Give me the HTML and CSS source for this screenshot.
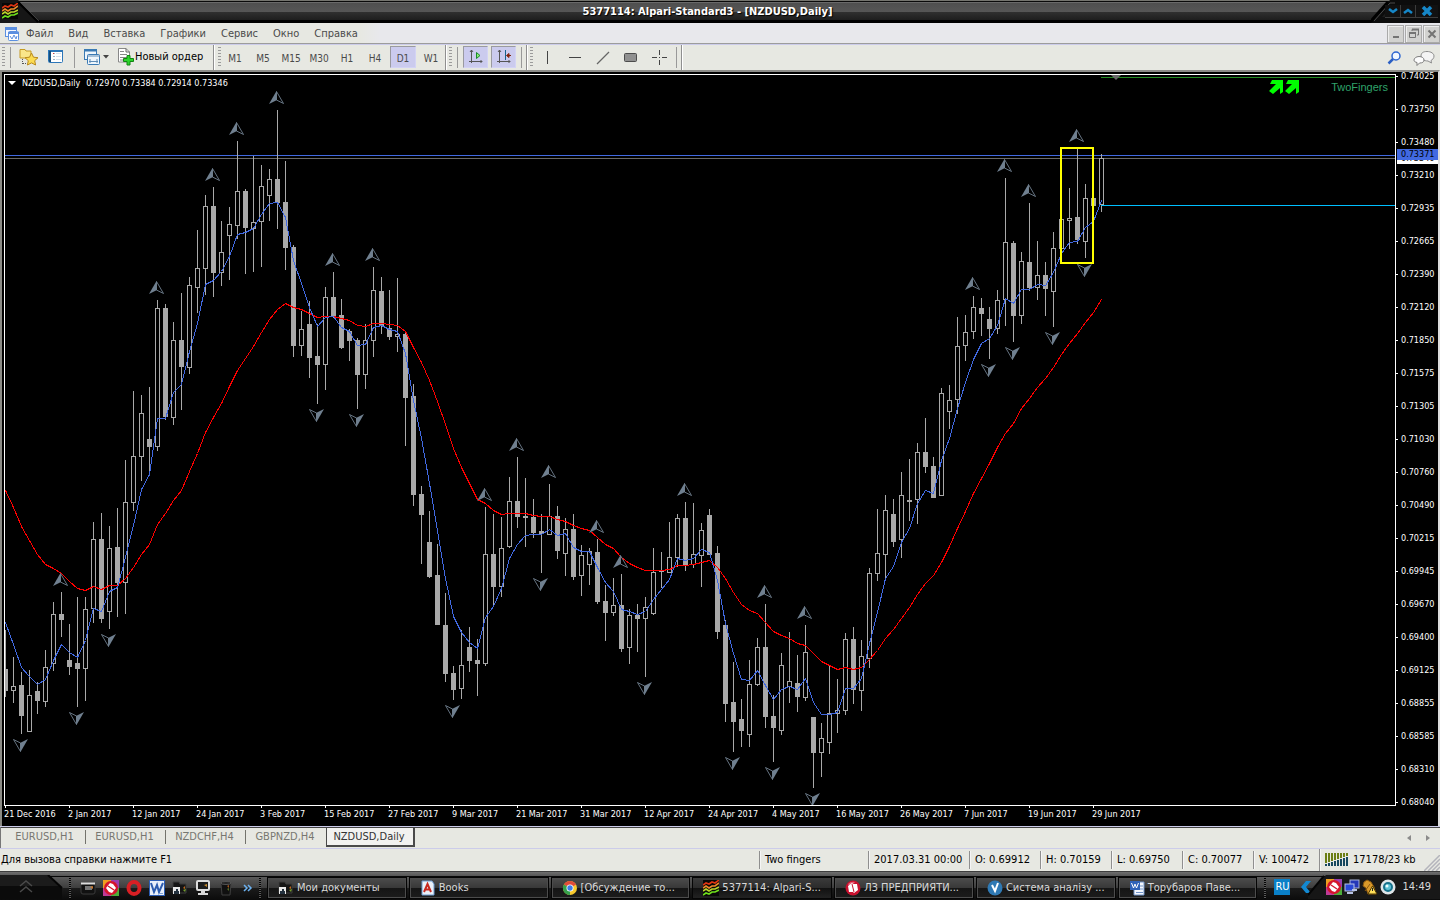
FILE: index.html
```html
<!DOCTYPE html>
<html lang="ru">
<head>
<meta charset="utf-8">
<title>5377114: Alpari-Standard3 - [NZDUSD,Daily]</title>
<link rel="stylesheet" href="styles.css">
</head>
<body>
<svg class="defs" aria-hidden="true">
  <defs>
    <symbol id="waves" viewBox="0 0 16 16">
      <rect width="16" height="16" fill="#080808"/>
      <g fill="none" stroke-width="1.600">
        <path d="M0 5 L3 3 L6 4 L9 2 L12 3 L16 0" stroke="#e03412"/>
        <path d="M0 8 L3 6 L6 8 L9 6 L12 6 L16 3" stroke="#ec8a2a"/>
        <path d="M0 11 L3 9 L6 11 L9 9 L12 9 L16 7" stroke="#b9d32b"/>
        <path d="M0 15 L3 13 L6 14 L9 12 L12 12 L16 10" stroke="#6fe01c"/>
      </g>
    </symbol>
    <symbol id="redball" viewBox="0 0 16 16">
      <circle cx="8" cy="8" r="7.500" fill="#c8102e"/>
      <path d="M3 4 Q6 1 10 2 L5 7Z" fill="#e9637a"/>
      <path d="M3 6 L7 3 L8 4 L12 4 L13 10 L9 13 L8 12 L4 12Z" fill="#fff"/>
      <path d="M7 4 L9 12" stroke="#c8102e" stroke-width="1"/>
    </symbol>
    <symbol id="rainbow" viewBox="0 0 16 16">
      <path d="M0 0H8V8H0Z" fill="#f0a020"/><path d="M8 0H16V8H8Z" fill="#9a3fb0"/>
      <path d="M0 8H8V16H0Z" fill="#c03a96"/><path d="M8 8H16V16H8Z" fill="#4cae3a"/>
      <circle cx="8" cy="8" r="7" fill="#d5142c"/>
      <path d="M3 8 L7 3 L10 4 L13 8 L9 13 L6 12Z" fill="#fff"/>
      <path d="M5 6 L11 10" stroke="#d5142c" stroke-width="1.300"/>
    </symbol>
    <symbol id="folder" viewBox="0 0 16 16">
      <path d="M1 2 H7 L8 4 H14 V13 H1Z" fill="#151515" stroke="#3c3c3c"/>
      <rect x="1" y="7" width="7" height="7" fill="#e8e8e8"/>
      <path d="M2 14 V11 H4 V9 H6 V11 H7 V14Z" fill="#23313e"/>
      <path d="M11 8 L13 6 V9Z" fill="#c26a1c"/><path d="M11 10 L14 9 L13 12Z" fill="#739d2c"/>
    </symbol>
    <symbol id="word" viewBox="0 0 16 16">
      <rect x=".5" y=".5" width="15" height="15" fill="#e8f0fb" stroke="#2c5db3"/>
      <path d="M2 3 L5 12 L8 5 L10 12 L14 3" fill="none" stroke="#2d5db0" stroke-width="2"/>
      <path d="M9 13.500H14" stroke="#7fa2d8"/>
    </symbol>
  </defs>
</svg>

<header class="titlebar">
  <svg class="title-left" viewBox="0 0 40 23" width="40" height="23" aria-hidden="true">
    <path d="M0 0H18L40 23H0Z" fill="#161616"/>
    <path d="M18 2L38 22" stroke="#000" stroke-width="2"/>
    <path d="M20 2L39 21" stroke="#555" stroke-width=".6"/>
    <use href="#waves" x="2" y="3" width="16" height="16"/>
  </svg>
  <h1 class="title">5377114: Alpari-Standard3 - [NZDUSD,Daily]</h1>
  <div class="window-controls">
    <svg class="window-edge" viewBox="0 0 24 23" width="24" height="23" aria-hidden="true">
      <path d="M0 23L19 0H24V23Z" fill="#0c0c0c"/><path d="M0 21L17 2" stroke="#000" stroke-width="3"/>
      <path d="M3 21L19 3H24" fill="none" stroke="#4a4a4a"/>
      <path d="M11 17L21 5H24V17Z" fill="#1c1c1c"/>
    </svg>
    <button class="window-button" aria-label="Свернуть"><svg viewBox="0 0 10 8" width="10" height="8"><path d="M1 2L5 5L9 2" fill="none" stroke="#1687c8" stroke-width="2.500"/></svg></button>
    <button class="window-button" aria-label="Развернуть"><svg viewBox="0 0 10 8" width="10" height="8"><path d="M1 6L5 3L9 6" fill="none" stroke="#1687c8" stroke-width="2.500"/></svg></button>
    <button class="window-button window-close" aria-label="Закрыть"><svg viewBox="0 0 12 10" width="12" height="10"><path d="M2 1L10 9M10 1L2 9" stroke="#1687c8" stroke-width="3.500"/></svg></button>
  </div>
</header>

<nav class="menubar">
  <svg class="menu-icon" viewBox="0 0 16 16" width="16" height="16" aria-hidden="true">
    <rect x="1.500" y="1.500" width="11" height="9" fill="#f4f8ff" stroke="#5b8fe0"/><path d="M1 3H13" stroke="#5b8fe0" stroke-width="2"/>
    <rect x="4.500" y="5.500" width="10" height="9" rx="1" fill="#fff" stroke="#5b8fe0"/><path d="M4 7H15" stroke="#5b8fe0" stroke-width="2"/>
    <path d="M6 10L8 13L10 9L12 13L13 10" fill="none" stroke="#5b8fe0"/>
  </svg>
  <button class="menu">Файл</button>
  <button class="menu">Вид</button>
  <button class="menu">Вставка</button>
  <button class="menu">Графики</button>
  <button class="menu">Сервис</button>
  <button class="menu">Окно</button>
  <button class="menu">Справка</button>
  <div class="mdi-controls">
    <button class="mdi" aria-label="Свернуть окно"><svg viewBox="0 0 12 12" width="12" height="12"><path d="M3 9H9" stroke="#747474" stroke-width="2"/></svg></button>
    <button class="mdi" aria-label="Восстановить окно"><svg viewBox="0 0 12 12" width="12" height="12"><path d="M4 3V1.500H10.500V7H9" fill="none" stroke="#747474"/><path d="M4 1.500H11" stroke="#747474" stroke-width="2"/><path d="M1.500 5V9.500H7.500V5" fill="none" stroke="#747474"/><path d="M1 5H8" stroke="#747474" stroke-width="2"/></svg></button>
    <button class="mdi" aria-label="Закрыть окно"><svg viewBox="0 0 12 12" width="12" height="12"><path d="M2.500 2.500L9.500 9.500M9.500 2.500L2.500 9.500" stroke="#747474" stroke-width="2"/></svg></button>
  </div>
</nav>

<div class="toolbar" role="toolbar" aria-label="Инструменты">
  <div class="tool-group tool-main">
    <span class="grip"></span><span class="line line-first"></span>
    <button class="tool tool-wide" aria-label="Новый график"><svg viewBox="0 0 20 18" width="20" height="18"><path d="M1 1.500H6L7 3H12V10H1Z" fill="#fae68a" stroke="#c59a24"/><path d="M3.500 11V16M4 15.500H8" stroke="#555" stroke-dasharray="1 1"/><path d="M12.500 5L14.500 9.200L19 9.700L15.700 12.700L16.600 17L12.500 14.900L8.400 17L9.300 12.700L6 9.700L10.500 9.200Z" fill="#fcdc52" stroke="#b8891c"/></svg></button>
    <button class="tool tool-wide tool-profiles" aria-label="Профили"><svg viewBox="0 0 18 16" width="18" height="16"><rect x="1.500" y="1.500" width="14" height="12" rx="1" fill="#fff" stroke="#2c76b8"/><path d="M1 2H16" stroke="#2c76b8" stroke-width="2"/><path d="M3 2V13" stroke="#16507f" stroke-width="2"/><path d="M6 4.500H8M6 7.500H8M6 10.500H8" stroke="#9fb5c8"/><path d="M6 4.500H7" stroke="#d33"/><path d="M9 4.500H14M9 7.500H14M9 10.500H14" stroke="#d4e0ec"/></svg></button>
    <span class="line"></span>
    <button class="tool tool-charts" aria-label="Расположение"><svg viewBox="0 0 26 18" width="26" height="18"><rect x="1.500" y="1.500" width="12" height="10" fill="#eef6fc" stroke="#3a7ab4"/><path d="M1 2.500H14" stroke="#3a7ab4" stroke-width="2"/><rect x="4.500" y="6.500" width="12" height="10" rx="1" fill="#eef6fc" stroke="#3a7ab4"/><path d="M4 8H17M6 13.500H15M7 11V15M14 11V15" stroke="#5e8cb5"/><path d="M20 7H26L23 10.500Z" fill="#444"/></svg></button>
    <button class="tool tool-order"><svg viewBox="0 0 18 18" width="18" height="18" aria-hidden="true"><path d="M1.500 .5H9L12.500 4V14H1.500Z" fill="#fff" stroke="#888"/><path d="M9 .5V4H12.500" fill="none" stroke="#666"/><path d="M3 3.500H7M3 6.500H10M3 9.500H10M3 12H7" stroke="#888"/><path d="M10 7.500H13V10.500H16.500V13.500H13V17H10V13.500H6.500V10.500H10Z" fill="#2bd42b" stroke="#128412"/></svg><span>Новый ордер</span></button>
  </div>
  <div class="tool-group tool-periods">
    <span class="grip"></span>
    <button class="period">M1</button><button class="period">M5</button><button class="period">M15</button><button class="period">M30</button><button class="period">H1</button><button class="period">H4</button><button class="period is-active" aria-pressed="true">D1</button><button class="period">W1</button>
  </div>
  <div class="tool-group tool-scroll">
    <span class="grip"></span><span class="line"></span>
    <button class="tool tool-toggle" aria-label="Автопрокрутка"><svg viewBox="0 0 16 16" width="16" height="16"><path d="M3.500 1V14M1 12.500H14M2 3L3.500 1L5 3M12.500 11L14 12.500L12.500 14" fill="none" stroke="#555"/><path d="M8.500 3.500V9.500L12 6.500Z" fill="#8bee72" stroke="#198a2c"/></svg></button>
    <button class="tool tool-toggle" aria-label="Сдвиг графика"><svg viewBox="0 0 16 16" width="16" height="16"><path d="M3.500 1V14M1 12.500H14M2 3L3.500 1L5 3M12.500 11L14 12.500L12.500 14" fill="none" stroke="#555"/><path d="M9.500 1V11" stroke="#17638b"/><path d="M15 6.500H11M13 4.500L10.500 6.500L13 8.500Z" fill="#b43410" stroke="#7e230a"/></svg></button>
    <span class="line"></span>
  </div>
  <div class="tool-group tool-draw">
    <span class="grip"></span>
    <button class="period" aria-label="Вертикальная линия"><svg viewBox="0 0 16 16" width="16" height="16"><path d="M8.500 2V15" stroke="#444"/></svg></button>
    <button class="period" aria-label="Горизонтальная линия"><svg viewBox="0 0 16 16" width="16" height="16"><path d="M2 8.500H14" stroke="#444"/></svg></button>
    <button class="period" aria-label="Трендовая линия"><svg viewBox="0 0 16 16" width="16" height="16"><path d="M2 15L14 3" stroke="#666" stroke-width="1.200"/></svg></button>
    <button class="period" aria-label="Прямоугольник"><svg viewBox="0 0 16 16" width="16" height="16"><rect x="1.500" y="4.500" width="12" height="8" rx="1" fill="#909090" stroke="#4c4c4c"/></svg></button>
    <button class="period" aria-label="Перекрестие"><svg viewBox="0 0 16 16" width="16" height="16"><path d="M8.500 1V6M8.500 11V16M1 8.500H6M11 8.500H16M8 8.500H9" stroke="#444"/></svg></button>
    <span class="line"></span>
  </div>
  <div class="tool-right">
    <button class="tool" aria-label="Поиск"><svg viewBox="0 0 14 14" width="14" height="14"><circle cx="9" cy="5" r="4" fill="#f2f8ff" stroke="#2e66d0" stroke-width="1.500"/><path d="M6 8L1.500 12.500" stroke="#2b5fc4" stroke-width="2.500"/></svg></button>
    <button class="tool" aria-label="Чат"><svg viewBox="0 0 22 16" width="22" height="16"><path d="M14 1.500C18 1.500 21 3.500 21 6S19.500 9.500 18 10.500L18.500 13L15 11C11 11 8 9 8 6S10 1.500 14 1.500Z" fill="#f4f4f4" stroke="#8d8d8d"/><path d="M6 6.500C9 6.500 11 8 11 10S9.500 13 6.500 13L4 15.500L4 12.500C2 12 1 11.500 1 10S3 6.500 6 6.500Z" fill="#fdfdfd" stroke="#7d7d7d"/></svg></button>
  </div>
</div>

<main class="chart">
  <div class="plot">
    <svg id="plot" class="plot-canvas" viewBox="5 75 1390 730" preserveAspectRatio="xMinYMin meet" role="img" aria-label="NZDUSD,Daily"></svg>
    <div class="plot-title"><span class="caret"></span><span>NZDUSD,Daily</span><span>0.72970 0.73384 0.72914 0.73346</span></div>
  </div>
  <div class="prices">
    <ul class="price-axis" id="prices"></ul>
    <span class="price-tag tag-last">0.73346</span>
    <span class="price-tag tag-ask">0.73371</span>
  </div>
  <ul class="date-axis" id="dates"></ul>
</main>

<div class="tabs">
  <div class="tab-list" role="tablist">
    <button class="tab" role="tab">EURUSD,H1</button>
    <button class="tab" role="tab">EURUSD,H1</button>
    <button class="tab" role="tab">NZDCHF,H4</button>
    <button class="tab" role="tab">GBPNZD,H4</button>
    <button class="tab is-current" role="tab" aria-selected="true">NZDUSD,Daily</button>
  </div>
  <div class="tab-scroll">
    <button class="scroll" aria-label="Назад"><svg viewBox="0 0 6 8" width="6" height="8"><path d="M5 1V7L1 4Z" fill="#8b8b8b"/></svg></button>
    <button class="scroll" aria-label="Вперёд"><svg viewBox="0 0 6 8" width="6" height="8"><path d="M1 1V7L5 4Z" fill="#8b8b8b"/></svg></button>
  </div>
</div>

<footer class="status">
  <span class="status-help">Для вызова справки нажмите F1</span>
  <span class="cell cell-name">Two fingers</span>
  <span class="cell cell-time">2017.03.31 00:00</span>
  <span class="cell">O: 0.69912</span>
  <span class="cell">H: 0.70159</span>
  <span class="cell">L: 0.69750</span>
  <span class="cell">C: 0.70077</span>
  <span class="cell cell-volume">V: 100472</span>
  <span class="cell cell-traffic">
    <svg viewBox="0 0 24 14" width="24" height="14" aria-hidden="true"><path d="M1 0V10M4 0V9M7 0V8M10 0V7M13 0V6M16 0V5M19 0V4M22 0V3" stroke="#6b7e14" stroke-width="2"/><path d="M1 11V13M4 10V13M7 9V13M10 8V13M13 7V13M16 6V13M19 5V13M22 4V13" stroke="#17485e" stroke-width="2"/></svg>
    <span>17178/23 kb</span>
    <svg class="size-grip" viewBox="0 0 16 16" width="16" height="16" aria-hidden="true"><path d="M0 16L16 0M4 16L16 4M8 16L16 8M12 16L16 12" stroke="#b4b4bc" stroke-width="1.500"/></svg>
  </span>
</footer>

<div class="taskbar">
  <button class="start" aria-label="Пуск"><svg viewBox="0 0 64 24" width="64" height="24"><path d="M0 0H48L62 13V24H0Z" fill="#1b1b1b"/><path d="M0 11H60L62 13V24H0Z" fill="#0b0b0b"/><path d="M48 0L62 13" stroke="#050505" stroke-width="2"/><path d="M20 11L26 6L32 11M20 17L26 12L32 17" fill="none" stroke="#4a4a4a" stroke-width="1.500"/></svg></button>
  <span class="dots"></span>
  <div class="quick">
    <button class="quick-item" aria-label="Рабочий стол"><svg viewBox="0 0 16 16" width="16" height="16"><rect x="1" y="3" width="14" height="11" rx="2" fill="#111" stroke="#3a3a3a"/><path d="M1 3.500H15" stroke="#ddd" stroke-width="2"/><rect x="5" y="6" width="7" height="4" fill="#777"/><path d="M10 7L13 6V9Z" fill="#c9762b"/></svg></button>
    <button class="quick-item" aria-label="Словарь"><svg viewBox="0 0 16 16" width="16" height="16"><use href="#rainbow"/></svg></button>
    <button class="quick-item" aria-label="Opera"><svg viewBox="0 0 16 16" width="16" height="16"><ellipse cx="8" cy="8" rx="5.500" ry="6" fill="none" stroke="#d91f24" stroke-width="4"/></svg></button>
    <button class="quick-item" aria-label="Word"><svg viewBox="0 0 16 16" width="16" height="16"><use href="#word"/></svg></button>
    <button class="quick-item" aria-label="Мои документы"><svg viewBox="0 0 16 16" width="16" height="16"><use href="#folder"/></svg></button>
    <button class="quick-item" aria-label="Мой компьютер"><svg viewBox="0 0 16 16" width="16" height="16"><rect x="2" y="1" width="12" height="9" rx="1" fill="#1c1c1c" stroke="#ddd" stroke-width="2"/><path d="M6 11H10V13H13V15H3V13H6Z" fill="#d8d8d8"/><path d="M9 5L12 4V7Z" fill="#c78a2b"/></svg></button>
    <button class="quick-item" aria-label="Корзина"><svg viewBox="0 0 16 16" width="16" height="16"><path d="M3 3H13L12 15H4Z" fill="#101010" stroke="#3f3f3f"/><ellipse cx="8" cy="3" rx="5" ry="1.500" fill="#232323" stroke="#555"/><path d="M9 6L11 5V8Z" fill="#a3571d"/><path d="M9 9L11 8V11Z" fill="#536f24"/></svg></button>
    <button class="quick-more" aria-label="Ещё"><svg viewBox="0 0 10 8" width="10" height="8"><path d="M1 1L4 4L1 7M5 1L8 4L5 7" fill="none" stroke="#6cb2f0" stroke-width="1.500"/></svg></button>
  </div>
  <span class="dots"></span>
  <div class="tasks">
    <button class="task"><svg viewBox="0 0 16 16" width="16" height="16"><use href="#folder"/></svg><span>Мои документы</span></button>
    <button class="task"><svg viewBox="0 0 16 16" width="16" height="16"><path d="M2 1H12L14 4V15H2Z" fill="#e9f0f8" stroke="#6d9bd0"/><path d="M4 12L7.500 4L11 12M5.500 9.500H9.500" fill="none" stroke="#c7281f" stroke-width="2"/></svg><span>Books</span></button>
    <button class="task"><svg viewBox="0 0 16 16" width="16" height="16"><circle cx="8" cy="8" r="7" fill="#f7c92e"/><path d="M8 8L1.900 4.500A7 7 0 0 1 14.100 4.500Z" fill="#e04b3a"/><path d="M8 8L1.900 4.500A7 7 0 0 0 8 15Z" fill="#35a04c"/><circle cx="8" cy="8" r="3.500" fill="#fff"/><circle cx="8" cy="8" r="2.700" fill="#3e7de8"/></svg><span>[Обсуждение то...</span></button>
    <button class="task is-pressed"><svg viewBox="0 0 16 16" width="16" height="16"><use href="#waves"/></svg><span>5377114: Alpari-S...</span></button>
    <button class="task"><svg viewBox="0 0 16 16" width="16" height="16"><use href="#redball"/></svg><span>ЛЗ ПРЕДПРИЯТИ...</span></button>
    <button class="task"><svg viewBox="0 0 16 16" width="16" height="16"><circle cx="8" cy="8" r="7.500" fill="#2f79b4"/><path d="M5 5L8 11L11 3" fill="none" stroke="#fff" stroke-width="2"/></svg><span>Система аналізу ...</span></button>
    <button class="task"><svg viewBox="0 0 16 16" width="16" height="16"><path d="M5 2H15V15H5Z" fill="#f4f7fd" stroke="#6f92c8"/><path d="M11 6H14M11 9H14M7 12.500H14" stroke="#6f92c8"/><rect x="1" y="1" width="10" height="9" fill="#2f62b8"/><path d="M2.500 3L4.500 8L6 4L7.500 8L9.500 3" fill="none" stroke="#fff"/></svg><span>Торубаров Паве...</span></button>
  </div>
  <span class="dots"></span>
  <div class="tray">
    <button class="lang">RU</button>
    <button class="tray-arrow" aria-label="Скрытые значки"><svg viewBox="0 0 12 12" width="12" height="12"><path d="M11 0L6 6L11 12H6L1 6L6 0Z" fill="#1389d2"/></svg></button>
    <svg class="tray-edge" viewBox="0 0 18 24" width="18" height="24" aria-hidden="true"><path d="M0 24V21L18 0V24Z" fill="#161616"/><path d="M0 20L16 1" stroke="#050505" stroke-width="2"/></svg>
    <div class="tray-icons">
      <svg viewBox="0 0 16 16" width="16" height="16" aria-hidden="true"><use href="#rainbow"/></svg>
      <svg viewBox="0 0 16 16" width="16" height="16" aria-hidden="true"><rect x="6" y="1" width="9" height="8" fill="#2537b8" stroke="#aab4d8"/><rect x="1" y="5" width="9" height="7" fill="#2a49d6" stroke="#b9c4e4"/><path d="M3 14H9M8 11H13" stroke="#b9c4e4" stroke-width="2"/></svg>
      <svg viewBox="0 0 16 16" width="16" height="16" aria-hidden="true"><path d="M2 3L5 1L9 3L12 8L14 15H6L4 9L1 7Z" fill="#d9992a" stroke="#8c5a10"/><path d="M3 12L8 5" stroke="#8c5a10"/><path d="M10.500 7L15 15H6Z" fill="#ffe05a" stroke="#4b3500"/><path d="M10.500 9V12" stroke="#222"/></svg>
      <svg viewBox="0 0 16 16" width="16" height="16" aria-hidden="true"><circle cx="8" cy="8" r="7.500" fill="#dfe5e8"/><circle cx="8" cy="8" r="4" fill="#5cc2d6" stroke="#17728c" stroke-width="2"/><circle cx="7" cy="7" r="1.500" fill="#eaffff"/></svg>
    </div>
    <time class="clock">14:49</time>
  </div>
</div>
<script src="chart.js"></script>
</body>
</html>
```

FILE: styles.css
```css
* { box-sizing: border-box; }
body {
  margin: 0; height: 100vh; min-height: 480px; overflow: hidden;
  display: flex; flex-direction: column;
  background: #e7e8e2; color: #000;
  font: 11px/14px "DejaVu Sans Condensed", "Noto Sans", sans-serif;
}
button { font: inherit; color: inherit; border: 0; padding: 0; margin: 0; background: none; display: flex; align-items: center; justify-content: center; white-space: nowrap; }
svg { display: block; flex: none; }
ul { list-style: none; margin: 0; padding: 0; }
.defs { position: absolute; width: 0; height: 0; }

.titlebar {
  flex: none; height: 23px; display: flex; align-items: stretch; justify-content: space-between;
  background: linear-gradient(#74746e 0 1px, #0a0a0a 1px 2px, #6a6a6a 2px 3px, #4f4f4f 3px, #565656 12px, #303030 12px, #1e1e1e 20px, #000 20px);
}
.title { flex: 1; margin: 0; padding: 5px 0 0 4px; text-align: center; font-size: 11px; line-height: 14px; font-weight: bold; color: #fff; text-shadow: 1px 1px 1px #000; }
.window-controls { display: flex; align-items: center; padding-right: 2px; background: linear-gradient(90deg, transparent 23px, #0c0c0c 23px); }
.window-button { width: 15px; height: 13px; border-left: 1px solid #3c3c3c; border-bottom: 1px solid #3c3c3c; background: #111; }
.window-close { width: 23px; }
.window-edge { margin-right: -10px; }
.window-edge + .window-button { border-left: 0; position: relative; }

.menubar { flex: none; height: 22px; display: flex; align-items: center; padding-left: 4px; background: linear-gradient(90deg, #e7e8e2 360px, #e8e8ec 380px); border-bottom: 1px solid #ccccea; box-shadow: inset 0 -1px #9c9c9c; color: #4b4b4b; }
.menu-icon { margin-right: 6px; }
.menu { margin-right: 15px; height: 20px; }
.mdi-controls { margin-left: auto; display: flex; gap: 1px; }
.mdi { width: 17px; height: 18px; background: #d2d2d0; border: 1px solid #aaa; box-shadow: inset 1px 1px #eee; }

.toolbar { flex: none; height: 25px; display: flex; align-items: stretch; background: #e7e8e2; }
.tool-group { display: flex; align-items: center; gap: 3px; border-right: 1px solid #8f8f8f; padding: 1px 4px 2px 3px; box-shadow: 1px 0 #fff; }
.grip { width: 3px; height: 20px; background: repeating-linear-gradient(#9b9b9b 0 1px, transparent 1px 3px); }
.line { width: 1px; height: 21px; background: #999; margin: 0 4px; }
.tool { height: 22px; }
.tool-main { width: 214px; padding: 1px 0 2px 2px; gap: 0; }
.tool-main .line { margin: 0 4px 0 5px; }
.tool-wide { width: 28px; }
.tool-charts { width: 30px; margin-left: 2px; }
.tool-profiles { width: 26px; }
.tool-order { margin-left: 6px; gap: 0; }
.tool-periods, .tool-draw { padding-left: 4px; padding-right: 0; gap: 0; }
.tool-scroll { width: 81px; gap: 3px; padding-right: 0; }
.tool-scroll .line { margin: 0 2px; }
.tool-draw { padding-left: 3px; }
.tool-draw .period { margin-right: 0; }
.tool-draw .line { margin: 0 4px 0 3px; }
.period { width: 28px; height: 22px; color: #4a4a4a; font-size: 10px; }
.tool-periods .period { padding-top: 3px; }
.period.is-active, .tool-toggle { background: #cbcbee; border: 1px solid #9a9aa0; border-right-color: #d3d3f5; border-bottom-color: #d3d3f5; }
.period.is-active { width: 26px; margin: 0 1px; }
.tool-toggle { width: 25px; }
.tool-right { margin-left: auto; display: flex; align-items: center; gap: 12px; padding-right: 5px; }

.chart {
  flex: 1; min-height: 0; display: grid; grid-template: minmax(0, 1fr) 20px / minmax(0, 1fr) 42px;
  background: #000; color: #fff; font-size: 9px; line-height: 12px;
  border: solid #8b8b85; border-width: 2px 2px 0 2px; border-top-color: #8c8c88; border-right-color: #dcdcdc;
  padding: 2px 0 0 2px;
}
.plot { position: relative; border: 1px solid #fff; overflow: hidden; }
.plot-canvas { width: 100%; height: auto; }
.plot-title { position: absolute; left: 3px; top: 2px; display: flex; align-items: center; gap: 6px; background: #000; }
.caret { border: 4px solid transparent; border-top-color: #fff; border-bottom: 0; }
.prices { position: relative; padding: 2px 0 4px; }
.price-axis { height: 100%; display: flex; flex-direction: column; justify-content: space-between; }
.price-axis li { height: 0; display: flex; align-items: center; gap: 3px; }
.price-axis li::before { content: ""; width: 2px; height: 1px; background: #fff; }
.price-tag { position: absolute; left: 1px; right: 0; padding-left: 4px; height: 11px; line-height: 11px; color: #000; }
.tag-last { top: 79px; background: #fff; }
.tag-ask { top: 75px; background: #4169e1; }
.date-axis { grid-column: 1 / -1; display: flex; overflow: hidden; }
.date-axis li { flex: 0 0 64px; white-space: nowrap; }
.date-axis li::before { content: ""; display: block; width: 1px; height: 2px; background: #fff; margin-left: 1px; }

.tabs { flex: none; height: 23px; display: flex; justify-content: space-between; background: #e7e8e2; border-top: 1px solid #ccccea; border-bottom: 1px solid #ccccea; box-shadow: inset 0 1px #444; color: #777771; }
.tab-list { display: flex; padding-left: 5px; align-items: flex-start; border-left: 1px solid #777; }
.tab { width: 80px; height: 14px; margin-top: 3px; padding-right: 2px; border-right: 1px solid #73736c; }
.tab:nth-last-child(2) { border-right: 0; }
.tab.is-current { width: 89px; height: 19px; margin: 1px 0 0; color: #333; background: #f2f2f0; border: solid #4a4a4a; border-width: 0 2px 2px 1px; }
.tab-scroll { display: flex; gap: 13px; padding-right: 9px; }

.status { flex: none; height: 22px; display: flex; align-items: center; padding-left: 1px; }
.status-help { flex: 1; }
.cell { flex: 0 0 71px; height: 18px; display: flex; align-items: center; padding-left: 5px; border-left: 1px solid #8f8f8f; box-shadow: inset 1px 0 #f5f5f5; white-space: nowrap; }
.cell-name { flex-basis: 109px; }
.cell-time { flex-basis: 101px; }
.cell-volume { flex-basis: 66px; }
.cell-traffic { flex-basis: 121px; height: 22px; gap: 4px; padding-left: 5px; }
.size-grip { margin-left: auto; align-self: flex-end; }

.taskbar {
  flex: none; height: 29px; display: flex; align-items: flex-end; padding-bottom: 1px; color: #d8d8d8;
  background: linear-gradient(#3e3e3e 0 1px, #6f6f6f 1px, #555 5px, #080808 5px 6px, #5a5a5a 6px, #3d3d3d 17px, #1b1b1b 17px, #0b0b0b);
}
.start { margin-right: 5px; }
.dots { width: 2px; height: 23px; background: repeating-linear-gradient(#050505 0 1px, #5a5a5a 1px 2px); }
.quick { display: flex; align-items: center; height: 23px; gap: 7px; padding: 0 6px 0 9px; }
.quick-more { width: 10px; margin-left: 2px; }
.tasks { flex: 1; min-width: 0; display: flex; gap: 2px; padding: 0 7px 0 6px; }
.task { flex: 1 1 0; min-width: 0; height: 22px; justify-content: flex-start; gap: 3px; padding-left: 10px; overflow: hidden; border: 1px solid #050505; box-shadow: inset 0 0 0 1px #4c4c4c; background: linear-gradient(#4c4c4c, #383838 10px, #151515 10px, #1c1c1c); }
.task.is-pressed { box-shadow: none; background: linear-gradient(#3b3b3b, #2b2b2b 10px, #111 10px, #222); }
.tray { display: flex; align-items: center; height: 24px; }
.lang { width: 16px; height: 16px; margin: 0 10px 0 8px; background: #0a80c8; color: #fff; }
.tray-edge { margin-left: -4px; }
.tray-icons { height: 24px; display: flex; align-items: center; gap: 2px; padding-right: 6px; background: #181818; }
.clock { align-self: stretch; display: flex; align-items: center; padding-right: 9px; background: #181818; }
```

FILE: chart.js
```js
// Each bar: high, body top, body bottom, low, and 1 when the body is filled.
const bars = [
[630,669,691,697,1],[657,686,691,703,0],[672,685,716,734,1],[670,695,732,732,0],[682,691,701,714,1],[650,667,702,707,0],[602,614,664,671,0],[592,614,620,637,1],
[624,660,667,675,1],[597,663,669,707,1],[597,609,669,701,0],[522,539,609,623,0],[513,539,619,623,1],[526,548,612,629,0],[508,547,583,617,1],[460,502,583,614,0],
[391,456,503,511,0],[395,413,457,481,0],[387,439,447,471,1],[300,308,447,451,0],[304,308,417,420,1],[322,340,418,425,0],[293,340,367,410,1],[277,285,368,374,0],
[230,268,288,313,0],[195,206,269,295,0],[187,206,273,297,1],[221,252,273,286,0],[207,224,236,280,0],[141,191,226,239,0],[189,191,228,274,1],[156,222,229,272,0],
[165,186,222,267,0],[169,179,196,221,0],[110,179,203,229,1],[161,202,248,270,1],[245,247,346,357,1],[311,329,346,356,0],[301,324,358,378,1],[324,356,365,404,1],
[287,297,365,390,0],[272,297,317,318,1],[299,315,348,349,1],[329,331,341,361,1],[338,340,375,409,1],[324,340,375,389,0],[267,290,341,357,0],[277,291,326,334,1],
[290,328,337,340,1],[278,334,337,352,0],[332,334,398,446,1],[384,396,495,506,1],[486,494,515,564,1],[511,542,577,578,1],[544,575,625,625,1],[593,625,674,682,1],
[666,673,690,700,1],[630,665,689,699,0],[627,647,661,672,1],[639,660,664,696,1],[507,554,664,666,0],[514,554,587,605,1],[517,548,587,597,0],[477,501,547,548,0],
[457,501,517,528,1],[478,516,518,547,1],[499,517,533,538,1],[514,531,534,573,1],[484,516,535,535,0],[506,516,551,559,1],[518,529,554,576,0],[514,529,577,580,1],
[545,555,576,596,0],[548,551,565,585,0],[539,552,602,604,1],[585,601,613,641,1],[578,605,613,616,0],[574,605,649,652,1],[609,615,648,664,0],[604,615,619,652,1],
[597,607,619,677,0],[548,572,614,615,0],[552,571,572,588,1],[522,557,573,573,0],[514,518,558,567,0],[502,518,565,571,1],[503,554,565,568,0],[523,530,556,587,0],
[509,515,555,555,1],[546,553,632,639,1],[620,625,704,722,1],[662,702,722,752,1],[699,719,731,747,1],[660,684,735,747,0],[638,647,685,686,0],[604,647,717,728,1],
[695,716,728,762,1],[653,665,731,735,0],[632,681,687,703,0],[655,683,697,712,1],[625,652,698,701,0],[717,717,753,788,1],[723,738,753,777,0],[665,713,743,754,0],
[679,710,714,733,0],[633,639,711,715,0],[627,639,690,704,1],[640,656,691,711,0],[568,573,659,668,0],[509,553,574,581,0],[495,510,555,580,0],[499,514,542,547,1],
[472,495,540,558,0],[459,500,502,521,1],[443,452,500,524,0],[418,452,467,473,1],[457,466,498,498,1],[388,393,496,496,0],[385,400,412,429,0],[317,346,400,414,0],
[315,332,346,361,0],[296,307,332,339,0],[298,308,314,336,1],[307,319,329,359,1],[290,300,329,334,0],[178,242,300,326,0],[241,243,316,342,1],[252,261,316,324,0],
[203,262,288,291,1],[241,275,288,300,0],[262,275,289,316,1],[232,248,292,327,0],[219,219,249,249,0],[188,218,221,249,0],[149,217,240,244,1],[184,198,242,258,0],
[198,198,206,206,1],[154,158,205,212,0]
];

const fast = [622,644,667,676,684,679,660,644,652,657,640,608,611,591,587,557,525,489,474,418,418,392,384,351,323,284,280,271,256,234,232,228,214,203,202,217,260,283,307,326,317,316,327,331,345,344,327,325,329,331,353,400,438,483,530,578,616,632,642,648,617,606,588,558,544,535,534,534,529,535,533,547,551,551,567,582,591,609,611,614,611,599,589,579,558,560,558,549,552,580,623,653,679,680,670,685,699,689,686,689,678,702,714,714,712,688,688,678,643,612,578,566,542,528,503,490,493,460,438,408,382,359,343,338,325,298,303,289,289,284,285,272,253,242,241,227,221,200];

const slow = [490,507,526,540,554,564,568,573,581,588,590,586,589,585,585,578,567,554,544,524,513,500,490,471,453,432,417,403,386,370,358,346,332,319,309,303,307,309,313,317,316,316,318,320,325,326,323,323,324,325,331,347,362,380,401,424,448,467,483,499,503,510,514,513,513,513,515,516,516,519,521,525,528,530,537,544,548,557,563,567,570,570,570,569,565,565,564,562,560,567,578,592,604,610,613,622,631,635,638,643,645,653,661,665,669,667,669,667,659,650,638,629,618,607,594,583,575,562,546,528,511,493,478,463,447,433,423,408,398,387,378,367,354,343,333,322,312,299];

// Fractal markers: bar index and the marker's top edge.
const peaks = [[7,573],[19,281],[26,168],[29,122],[34,91],[41,253],[46,248],[60,488],[64,438],[68,465],[74,520],[77,555],[85,483],[95,585],[100,606],[121,277],[125,159],[128,184],[134,129]];
const troughs = [[2,739],[9,712],[13,634],[39,409],[44,414],[56,705],[67,578],[80,682],[91,757],[96,767],[101,793],[123,364],[126,347],[131,332],[135,264]];

const barX = i => 5 + 8 * i;
const line = (values, color) =>
  `<polyline points="${values.map((y, i) => `${barX(i) + 0.5},${y + 0.5}`).join(" ")}" fill="none" stroke="${color}" shape-rendering="crispEdges"/>`;

let out = `<g shape-rendering="crispEdges">
<path d="M5 158.500H1395" stroke="#696969"/><path d="M5 155.500H1395" stroke="#4169e1"/>
<path d="M1101 77.500H1395" stroke="#228b22"/>`;
bars.forEach(([high, top, bottom, low, filled], i) => {
  const x = barX(i);
  out += `<rect x="${x}" y="${high}" width="1" height="${low - high}" fill="#a9a9a9"/>`;
  out += filled
    ? `<rect x="${x - 2}" y="${top}" width="5" height="${bottom - top}" fill="#a9a9a9"/>`
    : `<rect x="${x - 1.5}" y="${top + 0.5}" width="4" height="${bottom - top - 1}" fill="#000" stroke="#a9a9a9"/>`;
});
out += `</g>` + line(slow, "#ff0000") + line(fast, "#4169e1");
out += `<path d="M1101 205.500H1395" stroke="#00bfff"/><path d="M1111 75H1121L1116 80Z" fill="#696969"/>`;

const marker = (x, y, flip) => {
  const mirror = flip ? "translate(15 0) scale(-1 1)" : "";
  return `<g transform="translate(${x - 8} ${flip ? y + 13 : y}) scale(1 ${flip ? -1 : 1})">
  <path d="M7.5 0L0 13L8 9Z" fill="#708090" transform="${mirror}"/>
  <path d="M7.5 .5L14.500 12.500L7.500 9Z" fill="none" stroke="#708090" stroke-width=".9" transform="${mirror}"/></g>`;
};
peaks.forEach(([i, y]) => { out += marker(barX(i), y, false); });
troughs.forEach(([i, y]) => { out += marker(barX(i), y, true); });

out += `<rect x="1061" y="148" width="32" height="115" fill="none" stroke="#ffff00" stroke-width="2"/>`;
[1269, 1285].forEach(x => {
  out += `<path transform="translate(${x} 80)" d="M3 0H14V12L11 14V8L4 14L0 11L7 4H1Z" fill="#00ff00"/>`;
});
out += `<text x="1388" y="91" text-anchor="end" font-family="Liberation Sans, sans-serif" font-size="11" fill="#2fa36b">TwoFingers</text>`;
document.getElementById("plot").innerHTML = out;

const fill = (id, items) => {
  document.getElementById(id).innerHTML = items.map(t => `<li>${t}</li>`).join("");
};
fill("prices", ["0.74025","0.73750","0.73480","0.73210","0.72935","0.72665","0.72390","0.72120","0.71850","0.71575","0.71305","0.71030","0.70760","0.70490","0.70215","0.69945","0.69670","0.69400","0.69125","0.68855","0.68585","0.68310","0.68040"]);
fill("dates", ["21 Dec 2016","2 Jan 2017","12 Jan 2017","24 Jan 2017","3 Feb 2017","15 Feb 2017","27 Feb 2017","9 Mar 2017","21 Mar 2017","31 Mar 2017","12 Apr 2017","24 Apr 2017","4 May 2017","16 May 2017","26 May 2017","7 Jun 2017","19 Jun 2017","29 Jun 2017"]);
```
